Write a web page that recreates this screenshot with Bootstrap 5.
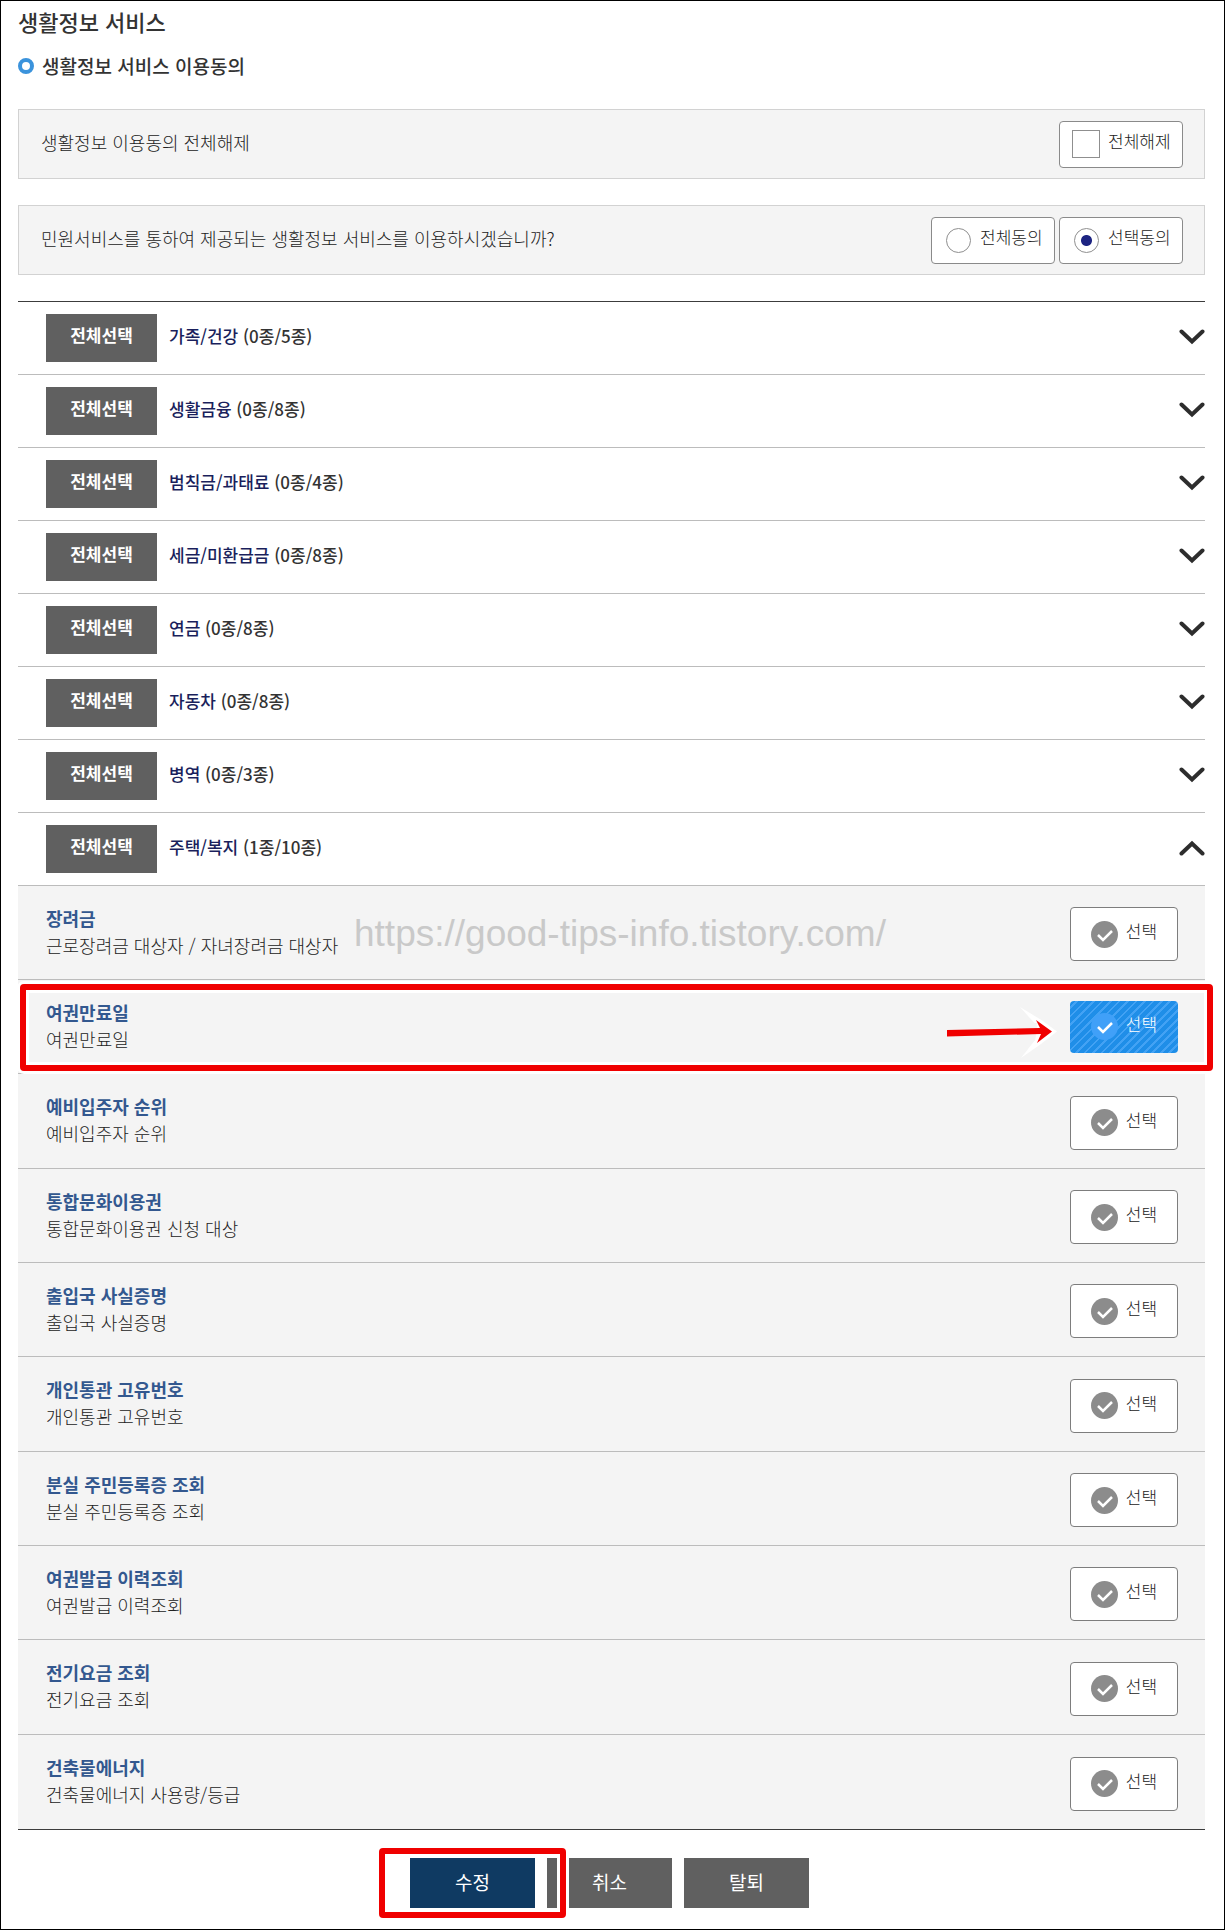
<!DOCTYPE html>
<html lang="ko">
<head>
<meta charset="utf-8">
<meta name="viewport" content="width=device-width, initial-scale=1">
<title>생활정보 서비스</title>
<link href="https://cdn.jsdelivr.net/npm/bootstrap@5.3.0/dist/css/bootstrap.min.css" rel="stylesheet">
<style>
:root { --line: #bcbcbc; --dark-line: #3c3c3c; --panel: #f4f4f4; --gray: #606060; --navy: #1a1f5c; }
body { font-family: "Noto Sans CJK KR", sans-serif; font-size: 18px; font-weight: 300; line-height: 27px; color: #222; background: #fff; }
.page { min-height: 100vh; border: 1px solid #000; padding: 4px 19px 20px 17px; }
.page-title { font-size: 22px; line-height: 32px; font-weight: 500; margin: 0 0 15px; color: #333; }
.sub-title { font-size: 19px; line-height: 28px; font-weight: 500; margin: 0 0 29px; color: #333; }
.ring { width: 16px; height: 16px; border: 4px solid #3b93dc; border-radius: 50%; margin-right: 8px; }
.ask { min-height: 70px; background: var(--panel); border: 1px solid #d2d2d2; padding: 10px 21px 10px 22px; margin-bottom: 26px; }
.ask p { margin: 0; padding-bottom: 4px; }
.pick { width: 124px; height: 47px; background: #fff; border: 1px solid #8a8a8a; border-radius: 4px; padding-left: 12px; font-size: 17px; cursor: pointer; }
.pick span { padding-bottom: 8px; }
.pick .form-check-input { width: 28px; height: 28px; margin: 0 8px 0 0; border: 1px solid #8f8f8f; border-radius: 0; flex: none; }
.pick .form-check-input[type=radio] { width: 25px; height: 25px; margin: 0 9px 0 2px; border-radius: 50%; }
.pick .form-check-input[type=radio]:checked { background: radial-gradient(circle, #1d2482 5px, #fff 6px); border-color: #8f8f8f; }
.groups { border-top: 1px solid var(--dark-line); border-bottom: 1px solid var(--dark-line); }
.group-head { height: 73px; border-bottom: 1px solid var(--line); padding-left: 28px; }
.btn-flat { border: 0; border-radius: 0; color: #fff; background: var(--gray); font-size: 19px; font-weight: 400; width: 125px; height: 50px; padding: 0 0 2px; }
.btn-flat:hover { color: #fff; background: #4c4c4c; }
.btn-all { width: 111px; height: 48px; font-size: 17px; font-weight: 700; padding-bottom: 6px; }
.btn-navy { background: #0f3a62; }
.toggle { flex: 1; border: 0; background: none; padding: 0 0 6px 12px; text-align: left; font-size: 17px; font-weight: 500; color: #333; }
.toggle b { font-weight: 500; color: var(--navy); }
.toggle svg { margin-top: 4px; }
.service { position: relative; height: 94px; background: var(--panel); border-bottom: 1px solid var(--line); padding: 0 27px 0 28px; }
.service:nth-child(3n) { height: 95px; }
.service:last-child { border-bottom: 0; }
.service h3 { font-size: 18px; line-height: 27px; font-weight: 700; color: #33588f; margin: 0; }
.service p { margin: 0; line-height: 27px; padding-bottom: 2px; }
.btn-pick { width: 108px; height: 54px; background: #fff; border: 1px solid #7d7d7d; border-radius: 4px; color: #222; font-size: 17px; font-weight: 300; padding: 0; margin-top: 3px; }
.btn-pick svg { margin-right: 8px; }
.btn-pick span { padding-bottom: 6px; }
.btn-pick.on { --disc: #40a0f8; height: 52px; margin-top: 0; border: 0; color: #fff; background: repeating-linear-gradient(135deg, #1f8ee8 0 4px, #43a2f4 4px 6px); }
.watermark { position: absolute; left: 336px; top: 26px; font: 37px/44px "Liberation Sans", sans-serif; color: #c9c9c9; }
.mark-box { position: absolute; border: 6px solid #f00000; border-radius: 4px; box-shadow: 0 0 0 3px #fff, inset 0 0 0 3px #fff; pointer-events: none; }
.mark-row { left: 2px; right: -8px; top: 4px; bottom: 2px; z-index: 1; }
.mark-save { left: -31px; top: -10px; width: 187px; height: 70px; }
.arrow { position: absolute; right: 138px; top: 22px; }
.actions { gap: 12px; padding: 28px 4px 0 0; }
</style>
</head>
<body>
<svg class="d-none" aria-hidden="true">
<symbol id="chev" viewBox="0 0 26 16"><path d="M2.5 2.5 13 12.500 23.500 2.500" fill="none" stroke="#2d2d2d" stroke-width="4" stroke-linecap="round"/></symbol>
<symbol id="tick" viewBox="0 0 27 27"><circle cx="13.500" cy="13.500" r="13.500" fill="var(--disc,#8c8c8c)"/><path d="M7 14 12 19 21 10" fill="none" stroke="#fff" stroke-width="2.500"/></symbol>
</svg>
<main class="page">
<h1 class="page-title">생활정보 서비스</h1>
<h2 class="sub-title d-flex align-items-center"><span class="ring"></span>생활정보 서비스 이용동의</h2>
<section class="ask d-flex justify-content-between align-items-center">
<p>생활정보 이용동의 전체해제</p>
<label class="pick d-flex align-items-center"><input class="form-check-input" type="checkbox"><span>전체해제</span></label>
</section>
<section class="ask d-flex justify-content-between align-items-center">
<p>민원서비스를 통하여 제공되는 생활정보 서비스를 이용하시겠습니까?</p>
<div class="d-flex gap-1">
<label class="pick d-flex align-items-center"><input class="form-check-input" type="radio" name="agree"><span>전체동의</span></label>
<label class="pick d-flex align-items-center"><input class="form-check-input" type="radio" name="agree" checked><span>선택동의</span></label>
</div>
</section>
<section class="groups">
<div id="heads"></div>
<div id="services"></div>
</section>
<div class="actions d-flex justify-content-center">
<div class="position-relative d-flex actions-row">
<button type="button" class="btn btn-flat btn-navy">수정</button>
</div>
<button type="button" class="btn btn-flat">취소</button>
<button type="button" class="btn btn-flat">탈퇴</button>
</div>
</main>
<script>
const heads = [["가족/건강","0종/5종"],["생활금융","0종/8종"],["범칙금/과태료","0종/4종"],["세금/미환급금","0종/8종"],["연금","0종/8종"],["자동차","0종/8종"],["병역","0종/3종"],["주택/복지","1종/10종"]];
document.getElementById("heads").innerHTML = heads.map(([name, count], i) => `
<div class="group-head d-flex align-items-center">
<button type="button" class="btn btn-flat btn-all">전체선택</button>
<button type="button" class="toggle d-flex align-items-center justify-content-between" aria-expanded="${i === 7}"><span><b>${name}</b> (${count})</span>
<svg width="26" height="16"><use href="#chev"${i === 7 ? ' transform="rotate(180 13 8)"' : ""}/></svg></button>
</div>`).join("");
const services = [["장려금","근로장려금 대상자 / 자녀장려금 대상자"],["여권만료일","여권만료일"],["예비입주자 순위","예비입주자 순위"],["통합문화이용권","통합문화이용권 신청 대상"],["출입국 사실증명","출입국 사실증명"],["개인통관 고유번호","개인통관 고유번호"],["분실 주민등록증 조회","분실 주민등록증 조회"],["여권발급 이력조회","여권발급 이력조회"],["전기요금 조회","전기요금 조회"],["건축물에너지","건축물에너지 사용량/등급"]];
const arrow = `<svg class="arrow" width="120" height="60" viewBox="0 0 120 60" aria-hidden="true"><path d="M73 5 96 19 110 29.500 94 42 74 56 88 38 90 24Z" fill="#fff"/><path d="M70 21 90 21 88 39 70 39Z" fill="#f4f4f4"/><path d="M0 28 93 26 89 18 105 29.500 90 41 94 32 0 34.500Z" fill="#f00000"/></svg>`;
document.getElementById("services").innerHTML = services.map(([name, text], i) => `
<div class="service d-flex align-items-center justify-content-between">
<div><h3>${name}</h3><p>${text}</p></div>
<button type="button" class="btn btn-pick d-flex align-items-center justify-content-center ${i === 1 ? "on" : ""}" aria-pressed="${i === 1}"><svg width="27" height="27"><use href="#tick"/></svg><span>선택</span></button>
${i === 0 ? '<div class="watermark">https://good-tips-info.tistory.com/</div>' : ""}${i === 1 ? arrow + '<div class="mark-box mark-row"></div>' : ""}
</div>`).join("");
document.querySelector(".actions-row").insertAdjacentHTML("beforeend", '<div class="mark-box mark-save"></div>');
</script>
<script src="https://cdn.jsdelivr.net/npm/bootstrap@5.3.0/dist/js/bootstrap.bundle.min.js"></script>
</body>
</html>
